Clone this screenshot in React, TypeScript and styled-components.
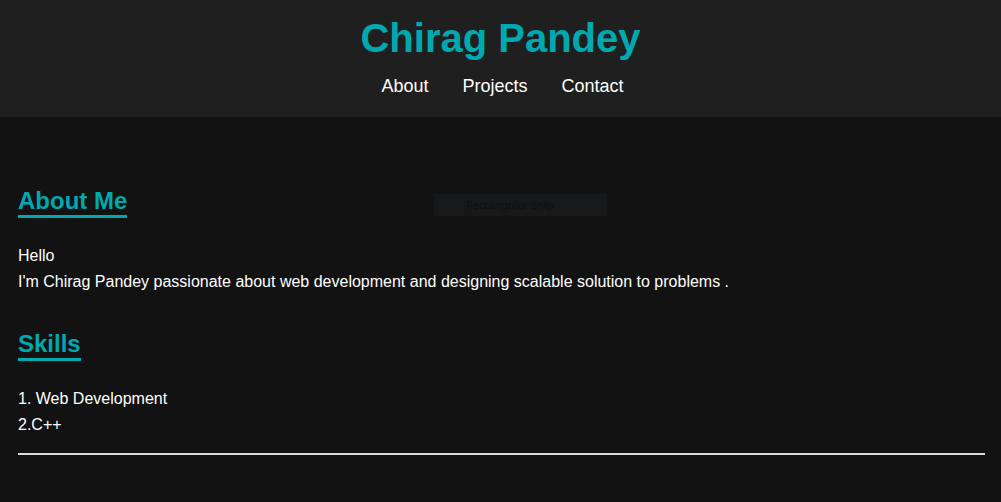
import React from "react";
import styled, { createGlobalStyle } from "styled-components";

const Global = createGlobalStyle`
  html, body { margin: 0; padding: 0; background: #121212; }
  body { font-family: "Liberation Sans", Arial, sans-serif; color: #ffffff; }
`;

const Header = styled.header`
  background: #1f1f1f;
  height: 117px;
  display: flex;
  flex-direction: column;
  align-items: center;
  padding-top: 13px;
  box-sizing: border-box;
`;

const Title = styled.h1`
  margin: 0;
  font-size: 40px;
  line-height: 50px;
  font-weight: 700;
  color: #00a8b0;
`;

const Nav = styled.nav`
  display: flex;
  gap: 34px;
  margin-top: 12px;
  padding-left: 4px;
`;

const NavLink = styled.a`
  color: #ffffff;
  font-size: 18px;
  line-height: 22px;
  text-decoration: none;
`;

const Main = styled.main`
  padding: 71px 16px 0 18px;
  position: relative;
`;

const Section = styled.section`
  margin-bottom: 36px;
`;

const Heading = styled.h2`
  display: inline-block;
  margin: 0 0 25px;
  padding-bottom: 1px;
  font-size: 24px;
  line-height: 26px;
  font-weight: 700;
  color: #00a8b0;
  border-bottom: 3px solid #00a8b0;
`;

const Text = styled.p`
  margin: 0;
  font-size: 16px;
  line-height: 26px;
`;

const Rule = styled.hr`
  margin: -21px 0 0;
  border: none;
  height: 2px;
  background: #d9d9d9;
`;

const Snip = styled.div`
  position: absolute;
  left: 434px;
  top: 77px;
  width: 173px;
  height: 22px;
  background: #17181a;
  color: #0f0f10;
  font-family: "Noto Sans", sans-serif;
  font-size: 11px;
  line-height: 22px;
  box-sizing: border-box;
  padding-left: 32px;
`;

export default function App() {
  return (
    <>
      <Global />
      <Header>
        <Title>Chirag Pandey</Title>
        <Nav>
          <NavLink href="#about">About</NavLink>
          <NavLink href="#projects">Projects</NavLink>
          <NavLink href="#contact">Contact</NavLink>
        </Nav>
      </Header>
      <Main>
        <Snip>Rectangular Snip</Snip>
        <Section>
          <Heading>About Me</Heading>
          <Text>Hello</Text>
          <Text>
            I'm Chirag Pandey passionate about web development and designing scalable solution to problems .
          </Text>
        </Section>
        <Section>
          <Heading>Skills</Heading>
          <Text>1. Web Development</Text>
          <Text>2.C++</Text>
        </Section>
        <Rule />
      </Main>
    </>
  );
}
